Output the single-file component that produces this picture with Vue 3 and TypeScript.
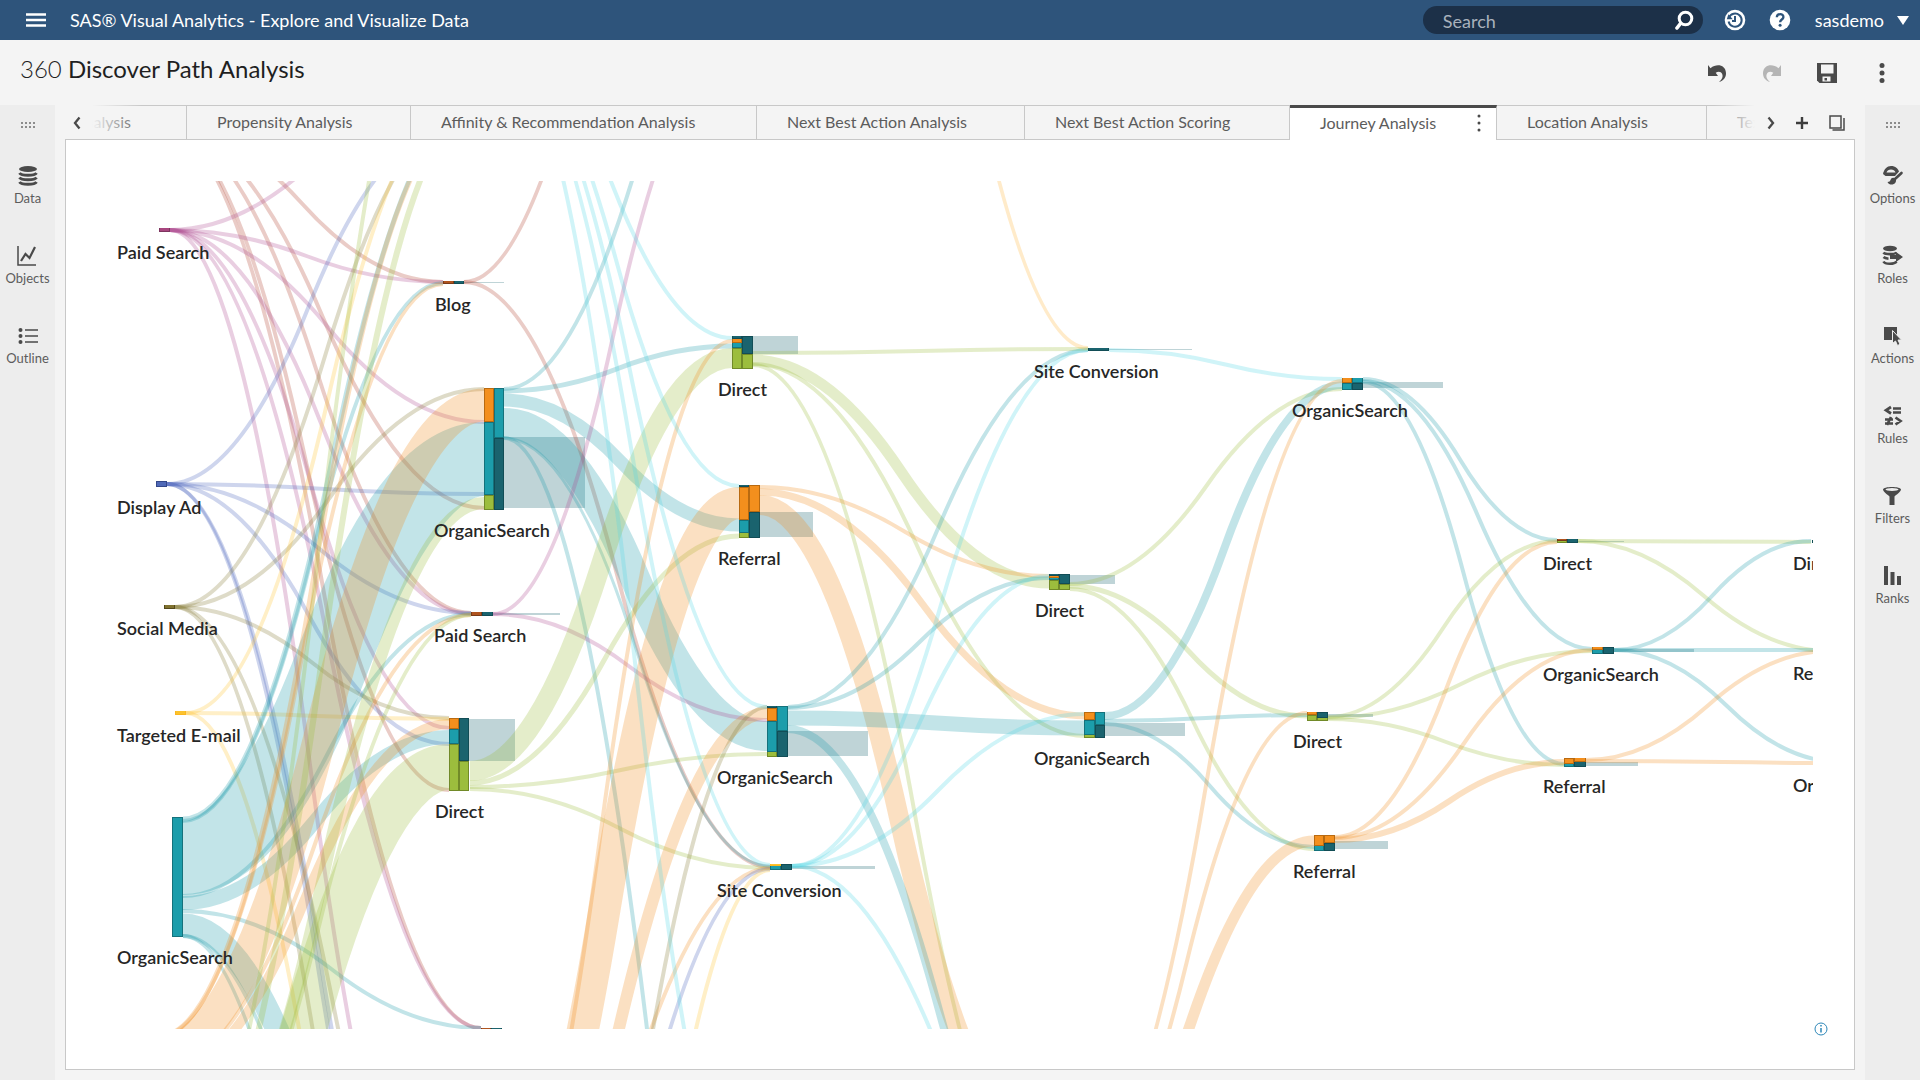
<script setup lang="ts">
type Tone = 'teal' | 'orange' | 'green' | 'pink' | 'red' | 'blue' | 'olive' | 'yellow' | 'cyan' | 'amber'
type Link = [Tone, number, number, number, number, number]
type Bar = [string, number, number, number, number]
type Label = [string, number, number]

const tones: Record<Tone, string> = {
  teal: '#1c9dab',
  orange: '#f08c1c',
  green: '#9cbb3c',
  pink: '#ac4a91',
  red: '#b0432f',
  blue: '#4a62bd',
  olive: '#857a33',
  yellow: '#ffc531',
  cyan: '#50d8e4',
  amber: '#ffb43c',
}

const edges: Record<string, string> = {
  '#1c9dab': '#14727c',
  '#f38f1d': '#b96a10',
  '#9cbd3d': '#718a28',
  '#1a636e': '#124d56',
  '#a8467f': '#7d3560',
  '#4f69b8': '#34488a',
  '#80722f': '#544a1c',
  '#fbc22e': '#fbb71e',
  '#b0541f': '#7a3a18',
}

const teal = '#1c9dab'
const orange = '#f38f1d'
const green = '#9cbd3d'
const dark = '#1a636e'
const brown = '#b0541f'

// tone, start x, start y, end x, end y, thickness
const links: Link[] = [
  // step 1: blog
  ['red', 161, 125, 443, 282, 4],
  ['red', 161, 125, 484, 508, 4],
  ['red', 161, 125, 471, 613, 4],
  ['red', 161, 125, 449, 790, 4],
  ['red', 161, 125, 481, 1028, 4],
  // step 1: paid search
  ['pink', 170, 230, 470, 82, 4],
  ['pink', 170, 230, 443, 282, 4],
  ['pink', 170, 230, 484, 422, 4],
  ['pink', 170, 230, 471, 614, 4],
  ['pink', 170, 230, 449, 728, 4],
  ['pink', 170, 230, 481, 1028, 4],
  ['pink', 170, 230, 450, 1300, 4],
  // step 1: display ad
  ['blue', 167, 484, 450, 130, 4],
  ['blue', 167, 484, 484, 494, 4],
  ['blue', 167, 484, 471, 613, 4],
  ['blue', 167, 484, 449, 744, 4],
  ['blue', 167, 484, 467, 1438, 4],
  ['blue', 167, 484, 475, 1445, 4],
  // step 1: social media
  ['olive', 175, 607, 475, 105, 4],
  ['olive', 175, 607, 484, 389, 4],
  ['olive', 175, 607, 449, 718, 4],
  ['olive', 175, 607, 475, 1610, 4],
  ['olive', 175, 607, 490, 1395, 4],
  // step 1: targeted e-mail
  ['yellow', 186, 713, 470, 85, 4],
  ['yellow', 186, 713, 449, 719, 4],
  ['yellow', 186, 713, 466, 1681, 4],
  // step 1: organic search
  ['teal', 183, 819, 483, 92, 5],
  ['teal', 183, 821, 443, 283, 4],
  ['teal', 183, 858, 484, 459, 74],
  ['teal', 183, 896, 471, 614, 4],
  ['teal', 183, 903, 449, 737, 14],
  ['teal', 183, 911, 481, 1028, 4],
  ['teal', 183, 925, 473, 1421, 23],
  ['teal', 183, 936, 470, 1813, 4],
  ['teal', 183, 936, 470, 1566, 4],
  // step 1: referral
  ['orange', 160, 1036, 468, 115, 5],
  ['orange', 160, 1036, 443, 284, 4],
  ['orange', 160, 1053, 484, 405, 33],
  ['orange', 160, 1070, 471, 615, 4],
  ['orange', 160, 1077, 449, 724, 10],
  // step 1: direct
  ['green', 165, 1235, 470, -115, 4],
  ['green', 165, 1235, 475, 110, 6],
  ['green', 165, 1238, 484, 503, 12],
  ['green', 165, 1245, 471, 615, 4],
  ['green', 165, 1269, 449, 767, 46],
  // step 2: blog
  ['red', 464, 282, 734, -338, 4],
  ['red', 464, 282, 770, 867, 4],
  // step 2: organic search
  ['teal', 504, 389, 764, -41, 4],
  ['teal', 504, 391, 732, 346, 5],
  ['teal', 504, 400, 739, 525, 13],
  ['teal', 504, 423, 767, 736, 30],
  ['teal', 504, 438, 770, 866, 3],
  ['teal', 504, 438, 794, 1653, 4],
  // step 2: paid search
  ['pink', 493, 614, 735, 50, 4],
  ['pink', 493, 614, 767, 720, 4],
  // step 2: direct
  ['green', 470, 771, 732, 358, 20],
  ['green', 470, 783, 739, 536, 5],
  ['green', 470, 787, 767, 754, 4],
  ['green', 470, 789, 770, 868, 4],
  // step 2: nodes outside the visible range
  ['orange', 470, 1316, 739, 503, 32],
  ['orange', 468, 1335, 732, 341, 4],
  ['orange', 470, 1348, 767, 713, 12],
  ['orange', 470, 1380, 770, 868, 4],
  ['olive', 477, 1750, 767, 707, 4],
  ['blue', 480, 1542, 770, 869, 4],
  ['yellow', 480, 2090, 770, 870, 4],
  ['cyan', 492, 30, 732, 338, 4],
  ['cyan', 492, 30, 739, 486, 4],
  ['cyan', 492, 30, 767, 707, 4],
  ['cyan', 492, 30, 770, 865, 4],
  ['cyan', 495, 30, 775, 1295, 4],
  // step 3: direct
  ['green', 753, 353, 1088, 349, 4],
  ['green', 753, 360, 1049, 583, 11],
  ['green', 753, 364, 1085, 736, 4],
  ['green', 753, 365, 1077, 1265, 4],
  // step 3: referral
  ['orange', 760, 487, 1049, 576, 4],
  ['orange', 760, 492, 1085, 716, 7],
  ['orange', 760, 505, 1040, 1139, 20],
  // step 3: organic search
  ['teal', 788, 707, 1088, 350, 4],
  ['teal', 788, 708, 1049, 578, 4],
  ['teal', 788, 718, 1085, 728, 15],
  ['teal', 788, 729, 1088, 1284, 8],
  // step 3: site conversion
  ['cyan', 792, 866, 1088, 350, 4],
  ['cyan', 792, 866, 1049, 576, 4],
  ['cyan', 792, 866, 1085, 714, 4],
  ['cyan', 792, 866, 1082, 1226, 4],
  ['amber', 788, -601, 1088, 348, 4],
  // step 4
  ['cyan', 1109, 350, 1342, 379, 4],
  ['green', 1070, 584, 1342, 389, 4],
  ['green', 1070, 586, 1307, 716, 5],
  ['green', 1070, 589, 1314, 849, 4],
  ['teal', 1105, 716, 1342, 385, 8],
  ['teal', 1105, 721, 1307, 715, 4],
  ['teal', 1105, 724, 1314, 847, 4],
  ['orange', 1070, 1190, 1342, 381, 4],
  ['orange', 1066, 1213, 1307, 713, 4],
  ['orange', 1070, 1198, 1314, 841, 11],
  // step 5
  ['teal', 1363, 379, 1557, 540, 4],
  ['teal', 1363, 381, 1592, 649, 4],
  ['teal', 1363, 382, 1564, 764, 4],
  ['green', 1328, 717, 1557, 541, 4],
  ['green', 1328, 718, 1592, 651, 4],
  ['green', 1328, 719, 1564, 765, 4],
  ['orange', 1335, 837, 1557, 542, 4],
  ['orange', 1335, 838, 1592, 650, 4],
  ['orange', 1335, 840, 1564, 762, 6],
  // step 6
  ['green', 1578, 541, 1811, 542, 4],
  ['green', 1578, 541, 1830, 651, 4],
  ['teal', 1614, 650, 1811, 541, 4],
  ['teal', 1614, 650, 1830, 650, 4],
  ['teal', 1614, 650, 1840, 762, 4],
  ['orange', 1586, 760, 1830, 651, 4],
  ['orange', 1586, 761, 1860, 763, 4],
]

// fill, x, y, width, height
const bars: Bar[] = [
  ['#a8467f', 159, 228, 11, 4],
  ['#4f69b8', 156, 481, 11, 6],
  ['#80722f', 164, 605, 11, 4],
  ['#fbc22e', 175, 711, 11, 4],
  [teal, 172, 817, 11, 120],
  [brown, 443, 281, 11, 3],
  [dark, 454, 281, 10, 3],
  [orange, 484, 388, 10, 34],
  [teal, 484, 422, 10, 73],
  [green, 484, 495, 10, 15],
  [teal, 494, 388, 10, 50],
  [dark, 494, 438, 10, 72],
  [brown, 471, 612, 11, 4],
  [dark, 482, 612, 11, 4],
  [orange, 449, 718, 10, 11],
  [teal, 449, 729, 10, 15],
  [green, 449, 744, 10, 47],
  [dark, 459, 718, 10, 43],
  [green, 459, 761, 10, 30],
  [brown, 481, 1028, 10, 3],
  [dark, 491, 1028, 11, 3],
  [dark, 732, 336, 10, 3],
  [orange, 732, 339, 10, 4],
  [teal, 732, 343, 10, 5],
  [green, 732, 348, 10, 21],
  [dark, 742, 336, 11, 18],
  [green, 742, 354, 11, 15],
  [dark, 739, 485, 10, 2],
  [orange, 739, 487, 10, 33],
  [teal, 739, 520, 10, 13],
  [green, 739, 533, 10, 5],
  [orange, 749, 485, 11, 27],
  [dark, 749, 512, 11, 26],
  [dark, 767, 706, 10, 2],
  [orange, 767, 708, 10, 13],
  [teal, 767, 721, 10, 31],
  [green, 767, 752, 10, 5],
  [teal, 777, 706, 11, 25],
  [dark, 777, 731, 11, 26],
  ['#fbc22e', 770, 864, 11, 2],
  [teal, 770, 866, 11, 4],
  [dark, 781, 864, 11, 6],
  [dark, 1088, 348, 21, 3],
  [dark, 1049, 574, 10, 2],
  [orange, 1049, 576, 10, 2],
  [teal, 1049, 578, 10, 2],
  [green, 1049, 580, 10, 10],
  [dark, 1059, 574, 11, 10],
  [green, 1059, 584, 11, 6],
  [orange, 1084, 712, 11, 8],
  [teal, 1084, 720, 11, 15],
  [green, 1084, 735, 11, 3],
  [teal, 1095, 712, 10, 13],
  [dark, 1095, 725, 10, 13],
  [orange, 1342, 378, 10, 5],
  [teal, 1342, 383, 10, 7],
  [teal, 1352, 378, 11, 5],
  [dark, 1352, 383, 11, 7],
  [orange, 1307, 712, 10, 3],
  [green, 1307, 715, 10, 6],
  [dark, 1317, 712, 11, 6],
  [green, 1317, 718, 11, 3],
  [orange, 1314, 835, 10, 11],
  [teal, 1314, 846, 10, 5],
  [orange, 1324, 835, 11, 8],
  [dark, 1324, 843, 11, 8],
  [brown, 1557, 539, 10, 2],
  [green, 1557, 541, 10, 2],
  [dark, 1567, 539, 11, 4],
  [orange, 1592, 647, 11, 3],
  [teal, 1592, 650, 11, 4],
  [dark, 1603, 647, 11, 7],
  [orange, 1564, 758, 10, 6],
  [teal, 1564, 764, 10, 3],
  [orange, 1574, 758, 12, 4],
  [dark, 1574, 762, 12, 5],
  [dark, 1812, 540, 10, 3],
]

// x, y, width, height of the share of visitors leaving at a node
const exits: number[][] = [
  [464, 282, 40, 1],
  [504, 437, 81, 71],
  [493, 613, 67, 2],
  [469, 719, 46, 42],
  [753, 336, 45, 18],
  [760, 512, 53, 25],
  [788, 731, 80, 25],
  [792, 866, 83, 3],
  [1109, 349, 83, 1],
  [1070, 575, 45, 9],
  [1105, 723, 80, 13],
  [1363, 382, 80, 6],
  [1328, 714, 45, 3],
  [1335, 841, 53, 8],
  [1578, 541, 46, 1],
  [1614, 649, 80, 3],
  [1586, 762, 52, 4],
]

const labels: Label[] = [
  ['Paid Search', 117, 259],
  ['Display Ad', 117, 514],
  ['Social Media', 117, 635],
  ['Targeted E-mail', 117, 742],
  ['OrganicSearch', 117, 964],
  ['Blog', 435, 311],
  ['OrganicSearch', 434, 537],
  ['Paid Search', 434, 642],
  ['Direct', 435, 818],
  ['Direct', 718, 396],
  ['Referral', 718, 565],
  ['OrganicSearch', 717, 784],
  ['Site Conversion', 717, 897],
  ['Site Conversion', 1034, 378],
  ['Direct', 1035, 617],
  ['OrganicSearch', 1034, 765],
  ['OrganicSearch', 1292, 417],
  ['Direct', 1293, 748],
  ['Referral', 1293, 878],
  ['Direct', 1543, 570],
  ['OrganicSearch', 1543, 681],
  ['Referral', 1543, 793],
  ['Direct', 1793, 570],
  ['Referral', 1793, 680],
  ['OrganicSearch', 1793, 792],
]

function linkPath([, x0, y0, x1, y1]: Link): string {
  const mx = (x0 + x1) / 2
  const my = (y0 + y1) / 2
  return `M${x0},${y0} Q${(x0 + mx) / 2},${y0} ${mx},${my} T${x1},${y1}`
}

const tabs = [
  { name: 'Propensity Analysis', width: 224 },
  { name: 'Affinity & Recommendation Analysis', width: 346 },
  { name: 'Next Best Action Analysis', width: 268 },
  { name: 'Next Best Action Scoring', width: 265 },
  { name: 'Journey Analysis', width: 207, active: true },
  { name: 'Location Analysis', width: 210 },
]

const leftTools = ['Data', 'Objects', 'Outline']
const rightTools = ['Options', 'Roles', 'Actions', 'Rules', 'Filters', 'Ranks']
</script>

<template>
  <div class="app">
    <header class="banner">
      <button class="icon-btn menu" aria-label="Menu">
        <svg width="20" height="14" viewBox="0 0 20 14"><path d="M0 1.5h20M0 7h20M0 12.5h20" stroke="#fff" stroke-width="2.6" /></svg>
      </button>
      <span class="product">SAS® Visual Analytics - Explore and Visualize Data</span>
      <label class="search">
        <input type="text" placeholder="Search" aria-label="Search" />
        <svg width="20" height="20" viewBox="0 0 20 20" fill="none" stroke="#fff">
          <circle cx="11.500" cy="8.500" r="6.300" stroke-width="3" />
          <path d="M6.500 13.500L3 18" stroke-width="3.600" stroke-linecap="round" />
        </svg>
      </label>
      <button class="icon-btn" aria-label="Recent">
        <svg width="22" height="22" viewBox="0 0 22 22">
          <circle cx="11" cy="11" r="10.3" fill="#fff" />
          <path d="M5 8.5A6.6 6.6 0 1 1 4.6 12.5M11 7v5H8" fill="none" stroke="#2e547b" stroke-width="2" />
          <path d="M2.8 10.2l6 0-4.4-5z" fill="#2e547b" />
        </svg>
      </button>
      <button class="icon-btn help" aria-label="Help">
        <svg width="22" height="22" viewBox="0 0 22 22">
          <circle cx="11" cy="11" r="10.3" fill="#fff" />
          <path d="M7.8 8.3c.2-4.3 6.8-4 6.6-.2-.1 2.4-3.3 2.5-3.3 5.2" fill="none" stroke="#2e547b" stroke-width="2.3" />
          <circle cx="11.1" cy="16.3" r="1.5" fill="#2e547b" />
        </svg>
      </button>
      <button class="user">sasdemo<svg width="12" height="9" viewBox="0 0 12 9"><path d="M0 0h12L6 9z" fill="#fff" /></svg></button>
    </header>

    <div class="titlebar">
      <h1><span>360</span> Discover Path Analysis</h1>
      <div class="actions">
        <button class="icon-btn" aria-label="Undo">
          <svg width="20" height="20" viewBox="0 0 20 20" fill="#4a4a4a"><path d="M1 2l2.5 3.2C10 0 18.5 2 19 10c.1 4.500-2.500 7.800-7 9 3.200-2.600 4.300-5.300 3.200-8-1.200-2.700-4-3-6.500-1.200L11 13H1z" /></svg>
        </button>
        <button class="icon-btn" aria-label="Redo" disabled>
          <svg width="20" height="20" viewBox="0 0 20 20" fill="#b5b5b5"><path d="M19 2l-2.500 3.200C10 0 1.500 2 1 10c-.1 4.500 2.500 7.800 7 9-3.200-2.600-4.300-5.300-3.200-8 1.200-2.700 4-3 6.500-1.200L9 13h10z" /></svg>
        </button>
        <button class="icon-btn" aria-label="Save">
          <svg width="20" height="20" viewBox="0 0 20 20">
            <path d="M0 0h20v20H2.500L0 17.500z" fill="#4a4a4a" />
            <path d="M4 1.500h12.500v9H4z" fill="#f4f4f4" />
            <path d="M5.500 13.500h8v5h-8z" fill="#f4f4f4" />
            <path d="M7.500 15h2.500v2.500H7.500z" fill="#4a4a4a" />
          </svg>
        </button>
        <button class="icon-btn" aria-label="More">
          <svg width="20" height="20" viewBox="0 0 20 20" fill="#4a4a4a"><circle cx="10" cy="2.500" r="2.500" /><circle cx="10" cy="10" r="2.500" /><circle cx="10" cy="17.500" r="2.500" /></svg>
        </button>
      </div>
    </div>

    <div class="workspace">
      <nav class="rail" aria-label="Panes">
        <svg class="grip" width="14" height="6" viewBox="0 0 14 6"><path d="M0 1h14M0 5h14" stroke="#8c8c8c" stroke-width="2" stroke-dasharray="2 2" /></svg>
        <button v-for="tool in leftTools" :key="tool" class="tool">
          <svg width="22" height="22" viewBox="0 0 22 22" fill="none" stroke="#4a4a4a">
            <template v-if="tool === 'Data'">
              <ellipse cx="11" cy="4" rx="9" ry="3" fill="#4a4a4a" stroke="none" />
              <path d="M2.500 8c2 3 15 3 17 0M2.500 12.500c2 3 15 3 17 0M2.500 17c2 3 15 3 17 0" stroke-width="3" />
            </template>
            <template v-else-if="tool === 'Objects'">
              <path d="M2 1v19h18" stroke-width="1.500" />
              <path d="M5 16l4.500-7 4 4L19 2" stroke-width="2.200" />
            </template>
            <template v-else>
              <path d="M8 5h13M8 11h13M8 17h13" stroke-width="1.500" />
              <g fill="#4a4a4a" stroke="none"><circle cx="3.500" cy="5" r="2" /><circle cx="3.500" cy="11" r="2" /><circle cx="3.500" cy="17" r="2" /></g>
            </template>
          </svg>
          <span>{{ tool }}</span>
        </button>
      </nav>

      <main class="report">
        <div class="tabbar">
          <button class="icon-btn scroll" aria-label="Previous pages">
            <svg width="8" height="14" viewBox="0 0 8 14"><path d="M6.500 1.500L2 7l4.500 5.500" fill="none" stroke="#4a4a4a" stroke-width="2.300" /></svg>
          </button>
          <div class="strip" role="tablist">
            <button class="tab first" role="tab"><span>Analysis</span></button>
            <button
              v-for="tab in tabs"
              :key="tab.name"
              class="tab"
              :class="{ active: tab.active }"
              role="tab"
              :style="{ width: tab.width + 'px' }"
            >
              <span>{{ tab.name }}</span>
              <svg v-if="tab.active" width="4" height="18" viewBox="0 0 4 18" fill="#4a4a4a"><circle cx="2" cy="2" r="1.500" /><circle cx="2" cy="9" r="1.500" /><circle cx="2" cy="16" r="1.500" /></svg>
            </button>
            <button class="tab last" role="tab"><span>Text Analysis</span></button>
          </div>
          <div class="tab-tools">
            <button class="icon-btn" aria-label="Next pages">
              <svg width="8" height="14" viewBox="0 0 8 14"><path d="M1.500 1.500L6 7l-4.500 5.500" fill="none" stroke="#4a4a4a" stroke-width="2.300" /></svg>
            </button>
            <button class="icon-btn" aria-label="New page">
              <svg width="14" height="14" viewBox="0 0 14 14"><path d="M7 1v12M1 7h12" stroke="#3c3c3c" stroke-width="2.400" /></svg>
            </button>
            <button class="icon-btn" aria-label="Pages">
              <svg width="16" height="16" viewBox="0 0 16 16" fill="none" stroke="#4a4a4a"><path d="M1 1h11v12H1z" stroke-width="1.500" /><path d="M15 3v12H3.500" stroke-width="1.500" /></svg>
            </button>
          </div>
        </div>

        <section class="canvas">
          <svg class="chart" viewBox="115 181 1698 848" role="img" aria-label="Path analysis">
            <rect v-for="(e, i) in exits" :key="'e' + i" :x="e[0]" :y="e[1]" :width="e[2]" :height="e[3]" fill="#1a636e" fill-opacity="0.28" />
            <path v-for="(l, i) in links" :key="'l' + i" :d="linkPath(l)" :stroke="tones[l[0]]" :stroke-width="l[5]" fill="none" stroke-opacity="0.27" />
            <g v-for="(b, i) in bars" :key="'b' + i">
              <rect :x="b[1]" :y="b[2]" :width="b[3]" :height="b[4]" :fill="edges[b[0]]" />
              <rect :x="b[1] + 1" :y="b[4] > 5 ? b[2] + 1 : b[2]" :width="b[3] - 2" :height="b[4] > 5 ? b[4] - 2 : b[4] - 1" :fill="b[0]" />
            </g>
            <text v-for="(t, i) in labels" :key="'t' + i" :x="t[1]" :y="t[2]">{{ t[0] }}</text>
          </svg>
          <button class="icon-btn info" aria-label="Details">
            <svg width="14" height="14" viewBox="0 0 14 14" fill="none" stroke="#2d87b8"><circle cx="7" cy="7" r="6" /><path d="M7 6v4.500M7 3v1.500" stroke-width="1.500" /></svg>
          </button>
        </section>
      </main>

      <nav class="rail" aria-label="Properties">
        <svg class="grip" width="14" height="6" viewBox="0 0 14 6"><path d="M0 1h14M0 5h14" stroke="#8c8c8c" stroke-width="2" stroke-dasharray="2 2" /></svg>
        <button v-for="tool in rightTools" :key="tool" class="tool">
          <svg width="22" height="22" viewBox="0 0 22 22" fill="#4a4a4a">
            <template v-if="tool === 'Options'">
              <path d="M1 9C2 4 5 1 9 1c4.500 0 7 2.500 8 5.500L13 11H3.500z" />
              <path d="M4.500 7.500c1-4 8-4 9 0z" fill="#ededed" />
              <path d="M19.500 8l-6.500 6" stroke="#4a4a4a" stroke-width="2.600" stroke-linecap="round" />
              <path d="M12 13c2 .8 2.800 2.500 1.500 4.500-2 3-6.500 2.800-8-.5 2 0 2.500-.8 3-2 .6-1.500 1.800-2.500 3.500-2z" />
            </template>
            <template v-else-if="tool === 'Roles'">
              <ellipse cx="8" cy="3.500" rx="7" ry="2.800" />
              <path d="M1.500 7.500c1.500 2.200 11 2.200 13 0M1.500 12c1 1 3 1.500 5 1.700M1.500 16.500c1.500 3 11 3 13 0" fill="none" stroke="#4a4a4a" stroke-width="2.600" />
              <path d="M8 10h6V7l7 5-7 5v-3H8z" />
            </template>
            <template v-else-if="tool === 'Actions'">
              <path d="M3 2h13v13H3z" />
              <path d="M11.500 5.500v13l3-2.500 2 4.500 2.500-1.200-2-4.300h3.500z" stroke="#ededed" />
            </template>
            <template v-else-if="tool === 'Rules'">
              <path d="M9 2L4 5.200l5 3.300M11 3.500h8M11 7.500h8M3 14.500h8M3 18.500h8M9 12l-4 8M13.500 12.500l5 3.500-5 3.500" fill="none" stroke="#4a4a4a" stroke-width="2.700" />
            </template>
            <template v-else-if="tool === 'Filters'">
              <path d="M2 4.500C2 1 20 1 20 4.500c0 2-5 5.500-6.500 7V20h-5v-8.500C7 10 2 6.500 2 4.500z" />
              <ellipse cx="11" cy="4.500" rx="6.500" ry="1.400" fill="#ededed" />
            </template>
            <template v-else>
              <path d="M2 1h4v19H2zM8.500 7h4v13h-4zM15 11h4v9h-4z" />
            </template>
          </svg>
          <span>{{ tool }}</span>
        </button>
      </nav>
    </div>
  </div>
</template>

<style>
body {
  margin: 0;
  background: #f4f4f4;
}
</style>

<style scoped>
* {
  box-sizing: border-box;
}

.app {
  display: flex;
  flex-direction: column;
  min-height: 100vh;
  background: #f4f4f4;
  color: #5c5c5c;
  font-family: Lato, 'Open Sans', sans-serif;
}

button {
  padding: 0;
  border: 0;
  background: none;
  color: inherit;
  font: inherit;
}

svg {
  display: block;
}

.icon-btn {
  display: flex;
  align-items: center;
  justify-content: center;
}

.banner {
  display: flex;
  align-items: center;
  height: 40px;
  padding: 0 11px 0 26px;
  background: #2e547b;
  color: #fff;
}

.product {
  flex: 1;
  margin-left: 24px;
  font-size: 18px;
  line-height: 24px;
}

.search {
  display: flex;
  align-items: center;
  width: 280px;
  height: 28px;
  margin-right: 21px;
  padding: 0 9px 0 20px;
  border-radius: 14px;
  background: #1c3048;
}

.search input {
  flex: 1;
  min-width: 0;
  padding: 2px 0 0;
  border: 0;
  outline: 0;
  background: none;
  color: #fff;
  font: inherit;
  font-size: 18px;
}

.search input::placeholder {
  color: #a9b2bc;
  opacity: 1;
}

.help {
  margin: 0 24px 0 23px;
}

.user {
  display: flex;
  align-items: center;
  gap: 13px;
  font-size: 18px;
}

.titlebar {
  display: flex;
  align-items: center;
  justify-content: space-between;
  height: 65px;
  padding: 0 28px 0 20px;
}

h1 {
  margin: 0 0 8px;
  color: #1f1f1f;
  font-size: 24px;
  font-weight: 400;
  line-height: 32px;
}

h1 span {
  font-weight: 300;
}

.actions {
  display: flex;
  gap: 35px;
}

.workspace {
  display: flex;
  flex: 1;
}

.rail {
  display: flex;
  flex: 0 0 55px;
  flex-direction: column;
  align-items: center;
  background: #ededed;
}

.grip {
  margin: 17px 0 16px;
}

.tool {
  display: flex;
  flex-direction: column;
  align-items: center;
  height: 80px;
  padding-top: 21px;
  font-size: 13px;
  line-height: 16px;
}

.tool span {
  margin-top: 3px;
}

.report {
  display: flex;
  flex: 1;
  flex-direction: column;
  min-width: 0;
  padding: 0 10px;
}

.tabbar {
  display: flex;
  height: 35px;
  margin-bottom: -1px;
}

.scroll {
  width: 27px;
  padding-right: 3px;
}

.strip {
  position: relative;
  z-index: 1;
  display: flex;
  flex: 1;
  min-width: 0;
  overflow: hidden;
}

.strip::before,
.strip::after {
  position: absolute;
  top: 0;
  bottom: 1px;
  width: 50px;
  background: linear-gradient(to right, #f4f4f4, #f4f4f400);
  content: '';
}

.strip::before {
  left: 0;
}

.strip::after {
  right: 0;
  width: 40px;
  background: linear-gradient(to left, #f4f4f4, #f4f4f400);
}

.tab {
  display: flex;
  flex: none;
  align-items: center;
  justify-content: space-between;
  padding: 0 15px 2px 30px;
  border: solid #c8c8c8;
  border-width: 1px 1px 1px 0;
  background: #f4f4f4;
  font-size: 16px;
  white-space: nowrap;
}

.tab.first {
  justify-content: flex-end;
  width: 95px;
  padding-right: 55px;
}

.tab.last {
  flex: 1;
  min-width: 0;
  border-right: 0;
}

.tab.active {
  padding-bottom: 3px;
  border-top: 3px solid #4a4a4a;
  border-bottom: 0;
  background: #fff;
}

.tab-tools {
  display: flex;
  gap: 20px;
  padding: 0 10px 0 12px;
}

.canvas {
  position: relative;
  flex: 1;
  margin-bottom: 10px;
  padding: 41px 41px 40px 49px;
  border: 1px solid #c8c8c8;
  background: #fff;
}

.chart {
  width: 100%;
}

.chart text {
  fill: #262626;
  font-size: 18px;
  font-weight: 600;
}

.info {
  position: absolute;
  right: 26px;
  bottom: 33px;
}
</style>
